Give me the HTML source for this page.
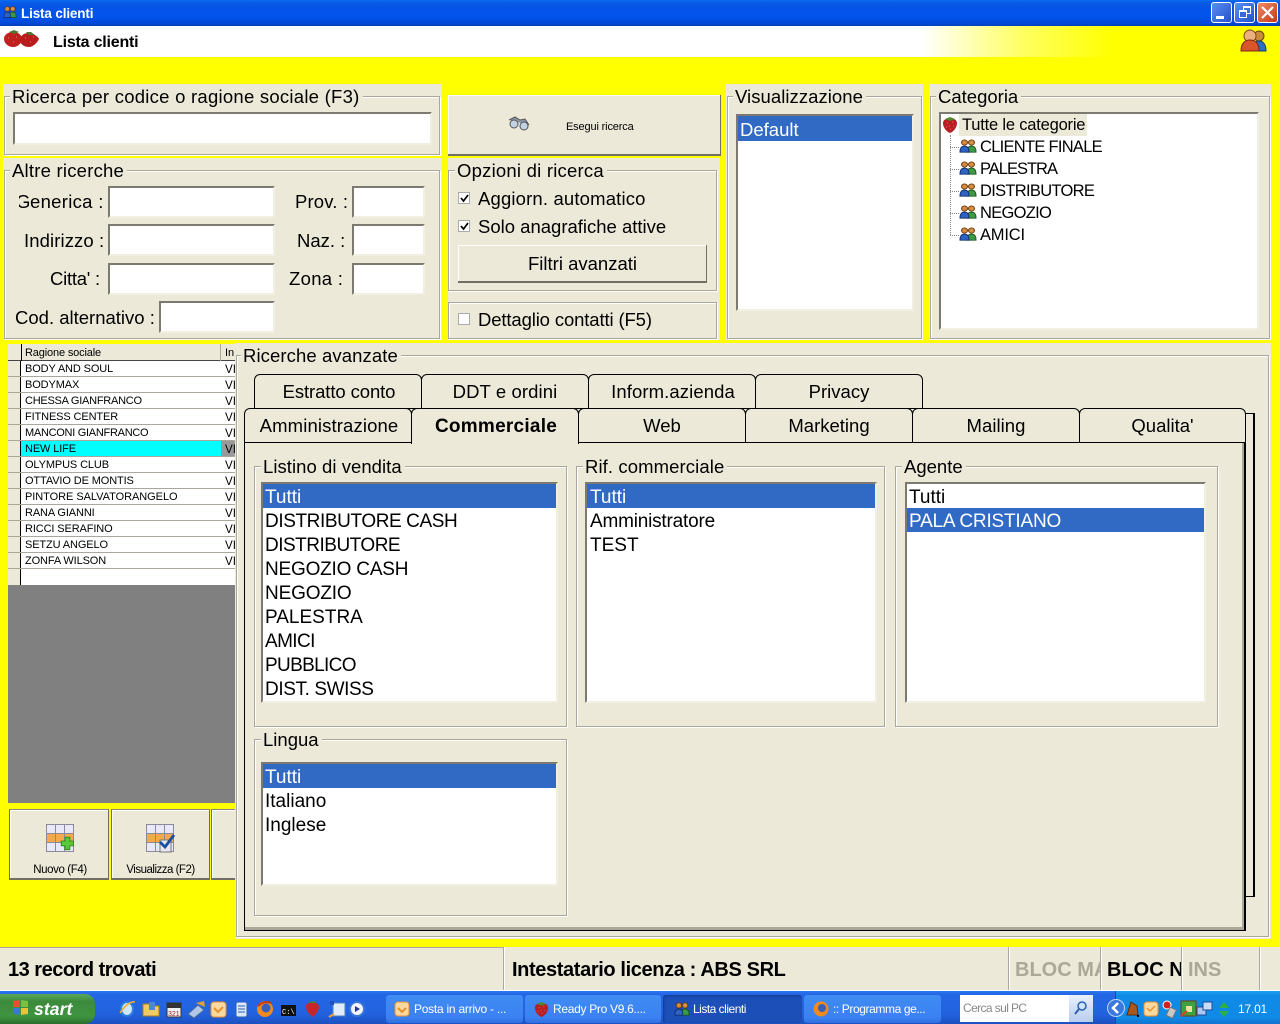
<!DOCTYPE html>
<html><head><meta charset="utf-8"><title>Lista clienti</title>
<style>
html,body{margin:0;padding:0;width:1280px;height:1024px;overflow:hidden;background:#ff0;font-family:"Liberation Sans",sans-serif;color:#000}
div,span,svg{position:absolute;box-sizing:border-box}
.t{white-space:nowrap;line-height:22px;height:22px;font-size:18.5px;margin-top:1px}
.tr{font-size:16.5px;letter-spacing:-.65px}
.p{background:#ece9d8}
.g{border:1px solid #aca899;box-shadow:inset 1px 1px 0 #fff,1px 1px 0 #fff}
.l{background:#ece9d8;padding:0 3px 0 2px}
.i{background:#fff;border:2px solid #7c7a70;border-right:2px solid #f1efe2;border-bottom:2px solid #f1efe2}
.s{background:#316ac5;color:#fff}
.li{font-size:19px;left:2px;margin-top:2px;white-space:nowrap;line-height:24px;height:24px}
.tab{background:#ece9d8;border:1px solid #000;border-bottom:1px solid #000;border-radius:6px 6px 0 0;text-align:center;font-size:18.5px;line-height:34px;height:35px;width:168px}
.r{left:0;width:227px;height:16px;background:#fff;border-bottom:1px solid #aca899}
.r .a{left:0;top:0;width:13px;height:15px;background:#ece9d8;border-right:1px solid #000}
.r .n{left:17px;top:1px;font-size:11px;letter-spacing:-.12px;line-height:15px;white-space:nowrap}
.r .v{left:217px;top:1px;font-size:11.6px;line-height:15px}
.sb{top:947px;height:43px;background:#ece9d8;border-left:1px solid #aca899;box-shadow:inset 1px 0 0 #fff;font-size:20px;font-weight:bold;line-height:46px;white-space:nowrap;overflow:hidden}
.tb{top:995px;height:28px;border-radius:3px;background:linear-gradient(#3f8cf3,#3c81f3 80%,#2f6fe0);color:#fff;font-size:12px;line-height:28px;white-space:nowrap}
.tb span{left:28px;top:0}
.bt{border-top:1px solid #8a887c;border-right:1px solid #716f64;border-bottom:2px solid #716f64;border-left:1px solid #716f64;box-shadow:inset 1px 1px 0 #fff}
</style></head><body>
<svg width="0" height="0" style="position:absolute">
<defs>
<symbol id="berry" viewBox="0 0 16 18"><path d="M8 3C12 2 15 4 15 7c0 5-4 9-7 10C5 16 1 12 1 7c0-3 3-5 7-4z" fill="#b81e22"/><path d="M3 3l5-2 5 2-5 2z" fill="#4d8a2d"/><path d="M5 7h1M10 6h1M7 10h1M11 10h1M4 11h1M8 13h1" stroke="#e0706a" stroke-width="1"/></symbol>
<symbol id="ppl" viewBox="0 0 18 16" preserveAspectRatio="none"><circle cx="12.500" cy="4" r="3" fill="#d89040" stroke="#6a3a10"/><path d="M8 15c0-5 2-7 4.500-7S17 10 17 15z" fill="#3c9a45" stroke="#1d5a20"/><circle cx="5.500" cy="4" r="3" fill="#d88a3c" stroke="#6a3a10"/><path d="M1 15c0-5 2-7 4.500-7S10 10 10 15z" fill="#2e62c4" stroke="#14306e"/></symbol>
<symbol id="grid" viewBox="0 0 28 28"><rect x=".5" y=".5" width="27" height="27" fill="#e8e8f8" stroke="#8a8a9a"/><rect x="1" y="9.500" width="26" height="9" fill="#f5a94a"/><path d="M9.500 1v26M18.500 1v26M1 9.500h26M1 18.500h26" stroke="#8a8a9a"/></symbol>
</defs></svg>

<!-- title bar -->
<div style="left:0;top:0;width:1280px;height:26px;background:linear-gradient(#0a6cf0,#0a5be6 10%,#0553e6 30%,#0455ee 60%,#0249d6 90%,#0240bc)"></div>
<svg style="left:3px;top:5px" width="14" height="14" viewBox="0 0 18 16"><use href="#ppl"/></svg>
<div class="t" style="left:21px;top:2px;color:#fff;font-size:13.5px;font-weight:bold;letter-spacing:-.15px">Lista clienti</div>
<div style="left:1211px;top:2px;width:21px;height:21px;border:1px solid #fff;border-radius:3px;background:linear-gradient(135deg,#5b8df0,#2452d0)"><div style="left:4px;top:13px;width:8px;height:3px;background:#fff"></div></div>
<div style="left:1234px;top:2px;width:21px;height:21px;border:1px solid #fff;border-radius:3px;background:linear-gradient(135deg,#5b8df0,#2452d0)"><div style="left:8px;top:3px;width:8px;height:8px;border:1px solid #fff;border-top-width:2px"></div><div style="left:4px;top:7px;width:8px;height:8px;border:1px solid #fff;border-top-width:2px;background:#3a68dc"></div></div>
<div style="left:1257px;top:2px;width:21px;height:21px;border:1px solid #fff;border-radius:3px;background:linear-gradient(135deg,#ee8a64,#c83a18)"><svg style="left:3px;top:3px" width="13" height="13"><path d="M1 1l11 11M12 1L1 12" stroke="#fff" stroke-width="2.200"/></svg></div>

<!-- white header -->
<div style="left:0;top:26px;width:1280px;height:31px;background:linear-gradient(90deg,#fff 0,#fff 72%,#ffff60 80%,#ff0 87%,#ff0 100%)"></div>
<svg style="left:2px;top:29px" width="38" height="20" viewBox="0 0 38 20"><path d="M2 10c0-5 5-7 9-7 5 0 9 3 9 7s-4 8-9 8c-5 0-9-4-9-8z" fill="#c0201e"/><path d="M18 11c0-4 4-7 8-7s10 3 11 6c-2 4-6 8-10 8-5 0-9-3-9-7z" fill="#b81c1c"/><path d="M7 3l5-2 5 2-5 2zM24 3l5 0 4 3-6 0z" fill="#4a7a30"/><path d="M6 9h1M11 13h1M14 8h1M23 9h1M28 13h1M31 8h1" stroke="#e88070"/></svg>
<div class="t" style="left:53px;top:31px;font-size:16px;font-weight:bold;letter-spacing:-.2px">Lista clienti</div>
<svg style="left:1240px;top:28px" width="28" height="24" viewBox="0 0 28 24"><circle cx="19" cy="8" r="5" fill="#c88a3c" stroke="#6a4412"/><path d="M13 23c0-7 2-10 6-10s7 3 7 10z" fill="#2b6fc4" stroke="#16386e"/><circle cx="10" cy="8" r="6" fill="#eeb080" stroke="#7a4a14"/><path d="M1 23c0-8 4-11 9-11s9 3 9 11z" fill="#d9542a" stroke="#7a2a10"/></svg>

<!-- search panel -->
<div class="p" style="left:3px;top:84px;width:439px;height:72px"></div>
<div class="g" style="left:4px;top:96px;width:436px;height:59px"></div>
<div class="t l" style="left:10px;top:85px;letter-spacing:.25px">Ricerca per codice o ragione sociale (F3)</div>
<div class="i" style="left:13px;top:112px;width:419px;height:33px"></div>

<!-- altre ricerche -->
<div class="p" style="left:3px;top:158px;width:439px;height:182px"></div>
<div class="g" style="left:4px;top:170px;width:436px;height:169px"></div>
<div class="t l" style="left:10px;top:159px;letter-spacing:.22px">Altre ricerche</div>
<div class="t" style="left:19px;top:190px;width:14px;overflow:hidden;text-indent:-3px">G</div>
<div class="t" style="left:30px;top:190px;letter-spacing:.3px">enerica :</div>
<div class="t" style="left:24px;top:229px;letter-spacing:.1px">Indirizzo :</div>
<div class="t" style="left:50px;top:267px;letter-spacing:-.25px">Citta' :</div>
<div class="t" style="left:15px;top:306px">Cod. alternativo :</div>
<div class="t" style="left:295px;top:190px;letter-spacing:.15px">Prov. :</div>
<div class="t" style="left:297px;top:229px">Naz. :</div>
<div class="t" style="left:289px;top:267px;letter-spacing:.3px">Zona :</div>
<div class="i" style="left:108px;top:186px;width:167px;height:32px"></div>
<div class="i" style="left:108px;top:224px;width:167px;height:32px"></div>
<div class="i" style="left:108px;top:263px;width:167px;height:32px"></div>
<div class="i" style="left:159px;top:301px;width:116px;height:32px"></div>
<div class="i" style="left:352px;top:186px;width:73px;height:32px"></div>
<div class="i" style="left:352px;top:224px;width:73px;height:32px"></div>
<div class="i" style="left:352px;top:263px;width:73px;height:32px"></div>

<!-- esegui -->
<div class="p" style="left:448px;top:95px;width:273px;height:61px;border-right:1px solid #716f64;border-bottom:2px solid #716f64;box-shadow:inset 1px 1px 0 #fff"></div>
<svg style="left:507px;top:116px" width="24" height="16" viewBox="0 0 24 16"><path d="M2 4l6-3 5 3 5-1 4 6" fill="#8a96a8" stroke="#555"/><circle cx="7" cy="8" r="4" fill="#c2d2e6" stroke="#555"/><circle cx="17" cy="10" r="4" fill="#c2d2e6" stroke="#555"/></svg>
<div class="t" style="left:566px;top:115px;font-size:11px;letter-spacing:-.15px">Esegui ricerca</div>

<!-- opzioni -->
<div class="p" style="left:448px;top:158px;width:272px;height:182px"></div>
<div class="g" style="left:448px;top:170px;width:269px;height:121px"></div>
<div class="g" style="left:448px;top:302px;width:269px;height:37px"></div>
<div class="t l" style="left:455px;top:159px;letter-spacing:.22px">Opzioni di ricerca</div>
<div style="left:458px;top:192px;width:12px;height:12px;background:#fff;border:1px solid #aaa"><svg style="left:1px;top:1px" width="9" height="9"><path d="M1 4l2.500 3L8 1" fill="none" stroke="#000" stroke-width="1.700"/></svg></div>
<div class="t" style="left:478px;top:187px;letter-spacing:.16px">Aggiorn. automatico</div>
<div style="left:458px;top:220px;width:12px;height:12px;background:#fff;border:1px solid #aaa"><svg style="left:1px;top:1px" width="9" height="9"><path d="M1 4l2.500 3L8 1" fill="none" stroke="#000" stroke-width="1.700"/></svg></div>
<div class="t" style="left:478px;top:215px">Solo anagrafiche attive</div>
<div class="p" style="left:458px;top:245px;width:249px;height:38px;border-right:1px solid #716f64;border-bottom:2px solid #716f64;box-shadow:inset 1px 1px 0 #fff"></div>
<div class="t" style="left:458px;width:249px;text-align:center;top:252px">Filtri avanzati</div>
<div style="left:458px;top:313px;width:12px;height:12px;background:#fff;border:1px solid #aaa"></div>
<div class="t" style="left:478px;top:308px;letter-spacing:-.13px">Dettaglio contatti (F5)</div>

<!-- visualizzazione -->
<div class="p" style="left:726px;top:84px;width:197px;height:256px"></div>
<div class="g" style="left:727px;top:96px;width:195px;height:243px"></div>
<div class="t l" style="left:733px;top:85px;letter-spacing:.05px">Visualizzazione</div>
<div class="i" style="left:736px;top:114px;width:178px;height:197px"><div class="s" style="left:0;top:0;width:174px;height:25px"></div><div class="li" style="top:2px;left:2px;margin-top:0;color:#fff;font-size:18.5px">Default</div></div>

<!-- categoria -->
<div class="p" style="left:929px;top:84px;width:342px;height:256px"></div>
<div class="g" style="left:930px;top:96px;width:340px;height:243px"></div>
<div class="t l" style="left:936px;top:85px">Categoria</div>
<div class="i" style="left:939px;top:112px;width:320px;height:218px"></div>
<div style="left:959px;top:114px;width:128px;height:22px;background:#ece9d8"></div>
<svg style="left:942px;top:116px" width="16" height="18" viewBox="0 0 16 18"><use href="#berry"/></svg>
<div class="t" style="left:962px;top:113px;font-size:16.5px;letter-spacing:-.2px">Tutte le categorie</div>
<div style="left:950px;top:135px;height:100px;width:1px;border-left:1px dotted #888"></div>
<div style="left:950px;top:147px;width:9px;border-top:1px dotted #888"></div>
<div style="left:950px;top:169px;width:9px;border-top:1px dotted #888"></div>
<div style="left:950px;top:191px;width:9px;border-top:1px dotted #888"></div>
<div style="left:950px;top:213px;width:9px;border-top:1px dotted #888"></div>
<div style="left:950px;top:235px;width:9px;border-top:1px dotted #888"></div>
<svg style="left:959px;top:139px" width="18" height="14" viewBox="0 0 18 16" preserveAspectRatio="none"><use href="#ppl" width="18" height="16"/></svg>
<svg style="left:959px;top:161px" width="18" height="14" viewBox="0 0 18 16" preserveAspectRatio="none"><use href="#ppl" width="18" height="16"/></svg>
<svg style="left:959px;top:183px" width="18" height="14" viewBox="0 0 18 16" preserveAspectRatio="none"><use href="#ppl" width="18" height="16"/></svg>
<svg style="left:959px;top:205px" width="18" height="14" viewBox="0 0 18 16" preserveAspectRatio="none"><use href="#ppl" width="18" height="16"/></svg>
<svg style="left:959px;top:227px" width="18" height="14" viewBox="0 0 18 16" preserveAspectRatio="none"><use href="#ppl" width="18" height="16"/></svg>
<div class="t tr" style="left:980px;top:135px;letter-spacing:-.72px">CLIENTE FINALE</div>
<div class="t tr" style="left:980px;top:157px;letter-spacing:-1px">PALESTRA</div>
<div class="t tr" style="left:980px;top:179px;letter-spacing:-.7px">DISTRIBUTORE</div>
<div class="t tr" style="left:980px;top:201px;letter-spacing:-.7px">NEGOZIO</div>
<div class="t tr" style="left:980px;top:223px;letter-spacing:-.2px">AMICI</div>

<!-- grid -->
<div style="left:8px;top:344px;width:228px;height:459px;background:#808080;overflow:hidden">
<div style="left:0;top:0;width:228px;height:17px;background:#ece9d8;border-bottom:1px solid #444"></div>
<div style="left:13px;top:0;width:1px;height:241px;background:#000"></div>
<div style="left:212px;top:0;width:1px;height:241px;background:#aca899"></div>
<div style="left:17px;top:2px;font-size:11px;letter-spacing:-.15px;line-height:15px;white-space:nowrap">Ragione sociale</div>
<div style="left:217px;top:2px;font-size:11px;line-height:15px">In</div>
<div class="r" style="top:17px"><div class="a"></div><div class="n">BODY AND SOUL</div><div class="v">VI</div></div>
<div class="r" style="top:33px"><div class="a"></div><div class="n">BODYMAX</div><div class="v">VI</div></div>
<div class="r" style="top:49px"><div class="a"></div><div class="n" style="letter-spacing:-.25px">CHESSA GIANFRANCO</div><div class="v">VI</div></div>
<div class="r" style="top:65px"><div class="a"></div><div class="n">FITNESS CENTER</div><div class="v">VI</div></div>
<div class="r" style="top:81px"><div class="a"></div><div class="n" style="letter-spacing:-.28px">MANCONI GIANFRANCO</div><div class="v">VI</div></div>
<div class="r" style="top:97px;background:#0ff"><div class="a"></div><div class="n">NEW LIFE</div><div style="left:213px;top:0;width:14px;height:15px;background:#999"></div><div class="v">VI</div></div>
<div class="r" style="top:113px"><div class="a"></div><div class="n">OLYMPUS CLUB</div><div class="v">VI</div></div>
<div class="r" style="top:129px"><div class="a"></div><div class="n">OTTAVIO DE MONTIS</div><div class="v">VI</div></div>
<div class="r" style="top:145px"><div class="a"></div><div class="n" style="letter-spacing:-.05px">PINTORE SALVATORANGELO</div><div class="v">VI</div></div>
<div class="r" style="top:161px"><div class="a"></div><div class="n">RANA GIANNI</div><div class="v">VI</div></div>
<div class="r" style="top:177px"><div class="a"></div><div class="n">RICCI SERAFINO</div><div class="v">VI</div></div>
<div class="r" style="top:193px"><div class="a"></div><div class="n">SETZU ANGELO</div><div class="v">VI</div></div>
<div class="r" style="top:209px"><div class="a"></div><div class="n">ZONFA WILSON</div><div class="v">VI</div></div>
<div class="r" style="top:225px;border:0;height:16px"><div class="a" style="height:16px"></div></div>
</div>

<!-- bottom buttons -->
<div class="p bt" style="left:9px;top:809px;width:100px;height:71px"></div>
<div class="p bt" style="left:111px;top:809px;width:99px;height:71px"></div>
<div class="p bt" style="left:211px;top:809px;width:24px;height:71px;border-right:0"></div>
<svg style="left:46px;top:824px" width="28" height="28" viewBox="0 0 28 28"><use href="#grid"/><path d="M19 15h5v4h4v5h-4v4h-5v-4h-4v-5h4z" fill="#5cc83c" stroke="#2c8a1c" transform="translate(1 -1) scale(.95)"/></svg>
<svg style="left:146px;top:824px" width="30" height="30" viewBox="0 0 30 30"><use href="#grid" width="28" height="28"/><rect x="14" y="16" width="11" height="12" fill="#e8e8f0" stroke="#777"/><path d="M14 18l5 5 9-12" fill="none" stroke="#1a4e9e" stroke-width="2.800"/></svg>
<div class="t" style="left:9px;width:102px;text-align:center;top:858px;font-size:11.5px;letter-spacing:-.4px">Nuovo (F4)</div>
<div class="t" style="left:111px;width:99px;text-align:center;top:858px;font-size:11.5px;letter-spacing:-.5px">Visualizza (F2)</div>

<!-- ricerche avanzate -->
<div class="p" style="left:235px;top:343px;width:1036px;height:596px"></div>
<div class="g" style="left:236px;top:355px;width:1033px;height:582px"></div>
<div class="t l" style="left:241px;top:344px;letter-spacing:.1px">Ricerche avanzate</div>

<div style="left:1240px;top:413px;width:15px;height:484px;border:1px solid #000;border-left:0;border-top:1px solid #000;border-right-width:2px;background:#ece9d8"></div>
<div class="tab" style="left:254px;top:374px;padding-left:2px;letter-spacing:-.1px">Estratto conto</div>
<div class="tab" style="left:421px;top:374px;letter-spacing:.1px">DDT e ordini</div>
<div class="tab" style="left:588px;top:374px;padding-left:2px;letter-spacing:.1px">Inform.azienda</div>
<div class="tab" style="left:755px;top:374px">Privacy</div>

<div style="left:244px;top:442px;width:1002px;height:489px;background:#ece9d8;border:1px solid #000;border-right-width:2px;box-shadow:inset -2px -3px 0 #aca899"></div>
<div class="tab" style="left:244px;top:408px;padding-left:2px;letter-spacing:.13px">Amministrazione</div>
<div class="tab" style="left:578px;top:408px">Web</div>
<div class="tab" style="left:745px;top:408px">Marketing</div>
<div class="tab" style="left:912px;top:408px;letter-spacing:.05px">Mailing</div>
<div class="tab" style="left:1079px;top:408px;width:167px">Qualita'</div>
<div class="tab" style="left:411px;top:408px;height:36px;border-bottom:0;padding-left:2px;font-weight:bold;font-size:19px;letter-spacing:.25px;line-height:36px;z-index:2">Commerciale</div>

<!-- Listino -->
<div class="g" style="left:254px;top:466px;width:313px;height:261px"></div>
<div class="t l" style="left:261px;top:455px;letter-spacing:.05px">Listino di vendita</div>
<div class="i" style="left:261px;top:482px;width:297px;height:221px">
<div class="s" style="left:0;top:0;width:293px;height:24px"></div>
<div class="li" style="top:0;color:#fff">Tutti</div>
<div class="li" style="top:24px;letter-spacing:-.4px">DISTRIBUTORE CASH</div>
<div class="li" style="top:48px;letter-spacing:-.5px">DISTRIBUTORE</div>
<div class="li" style="top:72px;letter-spacing:-.2px">NEGOZIO CASH</div>
<div class="li" style="top:96px;letter-spacing:-.15px">NEGOZIO</div>
<div class="li" style="top:120px">PALESTRA</div>
<div class="li" style="top:144px;letter-spacing:-.6px">AMICI</div>
<div class="li" style="top:168px;letter-spacing:-.65px">PUBBLICO</div>
<div class="li" style="top:192px;letter-spacing:-.4px">DIST. SWISS</div>
</div>

<!-- Rif -->
<div class="g" style="left:576px;top:466px;width:309px;height:261px"></div>
<div class="t l" style="left:583px;top:455px;letter-spacing:.1px">Rif. commerciale</div>
<div class="i" style="left:585px;top:482px;width:292px;height:221px">
<div class="s" style="left:0;top:0;width:288px;height:24px"></div>
<div class="li" style="top:0;left:3px;color:#fff">Tutti</div>
<div class="li" style="top:24px;left:3px;letter-spacing:-.2px">Amministratore</div>
<div class="li" style="top:48px;left:3px">TEST</div>
</div>

<!-- Agente -->
<div class="g" style="left:895px;top:466px;width:323px;height:261px"></div>
<div class="t l" style="left:902px;top:455px">Agente</div>
<div class="i" style="left:905px;top:482px;width:301px;height:221px">
<div class="s" style="left:0;top:24px;width:297px;height:24px"></div>
<div class="li" style="top:0">Tutti</div>
<div class="li" style="top:24px;color:#fff;letter-spacing:-.2px">PALA CRISTIANO</div>
</div>

<!-- Lingua -->
<div class="g" style="left:254px;top:739px;width:313px;height:177px"></div>
<div class="t l" style="left:261px;top:728px">Lingua</div>
<div class="i" style="left:261px;top:762px;width:297px;height:124px">
<div class="s" style="left:0;top:0;width:293px;height:24px"></div>
<div class="li" style="top:0;color:#fff">Tutti</div>
<div class="li" style="top:24px">Italiano</div>
<div class="li" style="top:48px">Inglese</div>
</div>

<!-- status bar -->
<div style="left:0;top:947px;width:1280px;height:44px;background:#ece9d8;border-top:1px solid #aca899;border-bottom:1px solid #fff"></div>
<div class="sb" style="left:0;width:503px;padding-left:8px;border:0;box-shadow:none;background:none;letter-spacing:-.5px">13 record trovati</div>
<div class="sb" style="left:503px;width:505px;padding-left:8px;letter-spacing:-.38px">Intestatario licenza : ABS SRL</div>
<div class="sb" style="left:1008px;width:92px;padding-left:6px;color:#aca899">BLOC MA</div>
<div class="sb" style="left:1100px;width:81px;padding-left:6px">BLOC NUM</div>
<div class="sb" style="left:1181px;width:78px;padding-left:6px;color:#aca899">INS</div>
<div class="sb" style="left:1259px;width:21px"></div>

<!-- taskbar -->
<div style="left:0;top:991px;width:1280px;height:33px;background:linear-gradient(#2b78ee,#2466e6 10%,#2262de 70%,#1c50c0)"></div>
<div style="left:0;top:994px;width:95px;height:30px;border-radius:0 10px 10px 0;background:linear-gradient(#5aa85a,#3c8a3c 25%,#3f9440 75%,#2a6e2c)"></div>
<svg style="left:11px;top:998px" width="19" height="19" viewBox="0 0 19 19"><path d="M2 3l7-1v7H2z" fill="#e8502a"/><path d="M10 2l7 1v6h-7z" fill="#7cc040"/><path d="M2 10h7v7l-7-1z" fill="#3a78e0"/><path d="M10 10h7v6l-7 1z" fill="#f0c030"/></svg>
<div class="t" style="left:34px;top:997px;color:#fff;font-size:17.5px;font-weight:bold;font-style:italic;letter-spacing:.1px">start</div>

<svg style="left:118px;top:999px" width="250" height="20" viewBox="0 0 250 20">
<ellipse cx="9" cy="10" rx="6" ry="7" fill="#cfe6ff" stroke="#2a80e0" stroke-width="2"/><path d="M2 14Q10 2 17 3" stroke="#f2b020" fill="none" stroke-width="1.500"/>
<path d="M25 5h7l2 2h7v10H25z" fill="#f0cc60" stroke="#a88020"/><rect x="31" y="3" width="6" height="8" fill="#4a88d8"/>
<rect x="49" y="4" width="14" height="14" fill="#f0f0f0" stroke="#333"/><rect x="49" y="4" width="14" height="5" fill="#333"/><text x="50" y="17" font-size="7" font-family="Liberation Sans" fill="#a02020">321</text>
<path d="M70 15l10-9 6 5-10 8z" fill="#b0c8e8" stroke="#4a6a98"/><path d="M78 4l8-2 1 6z" fill="#e0a030"/>
<rect x="93" y="3" width="15" height="15" rx="3" fill="#fad9a0" stroke="#e89030"/><path d="M96 9l4 4 5-5" fill="none" stroke="#e89030" stroke-width="2"/>
<rect x="118" y="3" width="11" height="15" rx="2" fill="#dce8fa" stroke="#2a60b0"/><path d="M120 7h7M120 10h7M120 13h7" stroke="#2a60b0"/>
<circle cx="147" cy="10" r="8" fill="#f08a20"/><circle cx="148" cy="9" r="4.500" fill="#3860b8"/><path d="M140 7Q146 1 153 4" stroke="#c03810" fill="none" stroke-width="2"/>
<rect x="163" y="6" width="15" height="11" fill="#111"/><text x="164" y="15" font-size="7" font-family="Liberation Mono" fill="#fff">C:\</text>
<path d="M193 4c5-1 8 1 8 4 0 4-4 8-6 10-3-2-7-6-7-10 0-3 2-5 5-4z" fill="#c8262a"/><path d="M190 4l5-2 4 2z" fill="#4d8a2d"/>
<rect x="215" y="4" width="12" height="13" fill="#e0ecfa" stroke="#5080c0"/><rect x="212" y="2" width="4" height="4" fill="#2050c0"/><path d="M211 18l5-3" stroke="#e8a040" stroke-width="2"/>
<circle cx="239" cy="10" r="7" fill="#f4f4ff" stroke="#3a78d8" stroke-width="2"/><path d="M237 7l5 3-5 3z" fill="#203890"/>
</svg>

<div class="tb" style="left:386px;width:137px"><svg style="left:8px;top:6px" width="16" height="16"><rect x="1" y="1" width="14" height="14" rx="3" fill="#fad9a0" stroke="#e89030"/><path d="M4 7l4 4 4-4" fill="none" stroke="#e89030" stroke-width="2"/></svg><span style="letter-spacing:-.25px">Posta in arrivo - ...</span></div>
<div class="tb" style="left:525px;width:136px"><svg style="left:9px;top:6px" width="15" height="17" viewBox="0 0 16 18"><use href="#berry"/></svg><span style="letter-spacing:-.3px">Ready Pro V9.6....</span></div>
<div class="tb" style="left:663px;width:139px;background:#1c4fb8;box-shadow:inset 1px 1px 2px #123a8a"><svg style="left:11px;top:6px" width="16" height="16" viewBox="0 0 18 16"><use href="#ppl"/></svg><span style="left:30px;letter-spacing:-.5px">Lista clienti</span></div>
<div class="tb" style="left:804px;width:137px"><svg style="left:9px;top:6px" width="16" height="16"><circle cx="8" cy="8" r="7.500" fill="#f08a20"/><circle cx="9" cy="7" r="4" fill="#3860b8"/></svg><span style="left:29px;letter-spacing:-.4px">:: Programma ge...</span></div>
<div style="left:960px;top:995px;width:109px;height:27px;background:#fff;color:#888;font-size:12px;letter-spacing:-.6px;line-height:26px;padding-left:3px">Cerca sul PC</div>
<div style="left:1069px;top:995px;width:24px;height:27px;background:linear-gradient(#e8f0fc,#b8cdf0)"><svg style="left:4px;top:5px" width="16" height="16"><circle cx="9" cy="6" r="4" fill="#cfe4ff" stroke="#2a60b0" stroke-width="1.500"/><path d="M6 9l-4 5" stroke="#2a60b0" stroke-width="2"/></svg></div>
<div style="left:1115px;top:991px;width:165px;height:33px;background:linear-gradient(#1aa0f0,#0f8ae6 15%,#0f8ae6 80%,#0f74d0);border-left:1px solid #0a4ea8"></div>
<svg style="left:1106px;top:998px" width="20" height="20"><circle cx="10" cy="10" r="8.500" fill="#3a78e0" stroke="#fff" stroke-opacity=".7"/><path d="M12 5l-5 5 5 5" fill="none" stroke="#fff" stroke-width="2.500"/></svg>
<svg style="left:1126px;top:999px" width="110" height="20" viewBox="0 0 110 20">
<path d="M1 16l4-13 6 4 1 9z" fill="#a8581c" stroke="#5a2c0c"/><rect x="11" y="16" width="2" height="2" fill="#000"/>
<rect x="18" y="3" width="14" height="14" rx="3" fill="#fad9a0" stroke="#e89030"/><path d="M21 9l3 3 5-5" fill="none" stroke="#e89030" stroke-width="1.500"/>
<circle cx="41" cy="6" r="4" fill="#d02020" stroke="#fff"/><rect x="42" y="9" width="7" height="9" fill="#c8c8c8" stroke="#777" transform="rotate(25 45 13)"/>
<rect x="55" y="2" width="15" height="15" fill="#3fa040" stroke="#7a3a10"/><rect x="60" y="7" width="6" height="6" fill="#f0e0a0"/><path d="M55 17l6-5" stroke="#e04020" stroke-width="2"/>
<rect x="71" y="8" width="9" height="8" fill="#a8c8f0" stroke="#204890"/><rect x="77" y="3" width="9" height="8" fill="#c8dcf8" stroke="#204890"/>
<path d="M98 3l5 6H93z" fill="#30b040"/><path d="M98 18l5-6H93z" fill="#30b040"/>
</svg>
<div class="t" style="left:1238px;top:997px;color:#fff;font-size:12px;letter-spacing:-.2px">17.01</div>
</body></html>
